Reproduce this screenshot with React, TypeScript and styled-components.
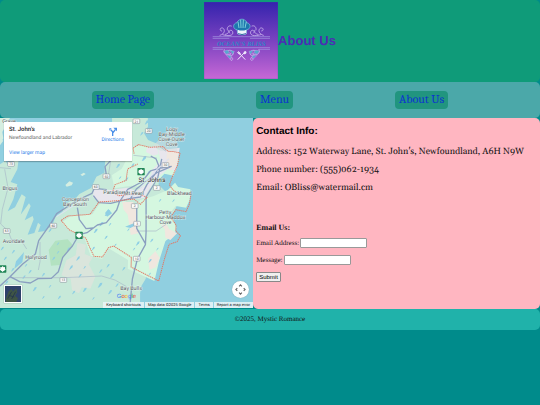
import React from "react";
import styled, { createGlobalStyle } from "styled-components";

const GlobalStyle = createGlobalStyle`
  *, *::before, *::after { box-sizing: border-box; }
  body {
    margin: 0;
    background: #008b8b;
    color: #111;
    font-family: "Liberation Serif", "Times New Roman", serif;
    text-rendering: geometricPrecision;
  }
  h1, h2, h3, p { margin: 0; }
`;

const Header = styled.header`
  display: flex;
  justify-content: center;
  align-items: center;
  padding: 2px 0 3px;
  border-radius: 5px;
  background: #0f9b79;
`;

const Logo = styled.svg`
  display: block;
  width: 74px;
  height: 77px;
`;

const PageTitle = styled.h1`
  color: #4b2db4;
  font: bold 13px/16px "Liberation Sans", Arial, sans-serif;
`;

const Nav = styled.nav`
  display: flex;
  justify-content: space-between;
  align-items: center;
  height: 36px;
  padding: 0 17%;
  border-radius: 5px;
  background: #4ba8a9;
`;

const NavLink = styled.a`
  padding: 1px 4px 2px;
  border-radius: 4px;
  background: #21957f;
  color: #0b34cf;
  font: 12px/15px Cambria, Caladea, "Noto Serif", serif;
  text-decoration: none;
`;

const Main = styled.main`
  display: grid;
  grid-template-columns: minmax(0, 15fr) minmax(0, 17fr);
  align-items: start;
`;

const MapFrame = styled.section`
  position: relative;
  height: 190px;
  overflow: hidden;
  background: #90cfe0;
  font-family: Roboto, Arial, sans-serif;
`;

const MapDrawing = styled.svg`
  display: block;
  width: 100%;
  height: 100%;
`;

const PlaceCard = styled.div`
  position: absolute;
  top: 4px;
  left: 4px;
  display: flex;
  justify-content: space-between;
  width: 128px;
  height: 39px;
  padding: 4px 8px 4px 5px;
  background: #fff;
  box-shadow: 0 1px 1px rgba(0, 0, 0, 0.25);
`;

const PlaceText = styled.div`
  display: flex;
  flex-direction: column;
  align-items: flex-start;
`;

const PlaceName = styled.h2`
  color: #222;
  font-size: 6px;
  font-weight: 500;
  line-height: 8px;
`;

const PlaceRegion = styled.p`
  color: #666;
  font-size: 5px;
  line-height: 9px;
`;

const MapLink = styled.a<{ $spaced?: boolean }>`
  display: flex;
  flex-direction: column;
  align-items: center;
  margin-top: ${(p) => (p.$spaced ? "6px" : "1px")};
  color: #2b7de9;
  font-size: 5px;
  line-height: 8px;
  text-decoration: none;
`;

const DirectionsIcon = styled.svg`
  width: 8px;
  height: 9px;
`;

const SatelliteButton = styled.button`
  position: absolute;
  bottom: 5px;
  left: 4px;
  width: 18px;
  height: 18px;
  padding: 1px;
  border: 0;
  background: #fff;
  box-shadow: 0 0 1px rgba(0, 0, 0, 0.4);
  svg { display: block; width: 16px; height: 16px; }
`;

const CameraButton = styled.button`
  position: absolute;
  right: 4px;
  bottom: 10px;
  width: 17px;
  height: 17px;
  padding: 3px;
  border: 0;
  border-radius: 50%;
  background: #fff;
  box-shadow: 0 0 1px rgba(0, 0, 0, 0.3);
  svg { display: block; width: 11px; height: 11px; }
`;

const Credits = styled.div`
  position: absolute;
  right: 0;
  bottom: 0;
  display: flex;
  gap: 1px;
`;

const creditText = `
  padding: 0 3px;
  border: 0;
  background: rgba(235, 245, 247, 0.85);
  color: #111;
  font: 4px/6px Roboto, Arial, sans-serif;
  text-decoration: none;
  text-rendering: geometricPrecision;
  white-space: nowrap;
`;
const CreditButton = styled.button`${creditText}`;
const CreditNote = styled.span`${creditText}`;
const CreditLink = styled.a`${creditText}`;

const Contact = styled.section`
  height: 191px;
  padding: 8px 3px;
  border-radius: 5px;
  background: #ffb6c1;
`;

const ContactTitle = styled.h2`
  margin-bottom: 9px;
  color: #000;
  font: bold 10px/12px "Liberation Sans", Arial, sans-serif;
`;

const ContactLine = styled.p`
  margin-bottom: 6px;
  font: 9px/12px Gelasio, Georgia, "Liberation Serif", serif;
`;

const MessageForm = styled.form`
  display: flex;
  flex-direction: column;
  align-items: flex-start;
  margin-top: 28px;
`;

const FormTitle = styled.h3`
  margin-bottom: 5px;
  font-size: 8px;
  line-height: 10px;
`;

const Field = styled.div`
  display: flex;
  align-items: center;
  gap: 1px;
  height: 10px;
  margin-bottom: 7px;
`;

const FieldLabel = styled.label`
  font-size: 7px;
  line-height: 9px;
`;

const TextInput = styled.input`
  width: 67px;
  height: 10px;
  padding: 0 1px;
  border: 1px solid #999;
  border-radius: 1px;
  background: #fff;
  font-size: 6px;
`;

const SubmitButton = styled.button`
  height: 10px;
  padding: 0 2px;
  border: 1px solid #888;
  border-radius: 1px;
  background: #efefef;
  color: #000;
  font: 6px/8px "Liberation Sans", Arial, sans-serif;
`;

const Footer = styled.footer`
  border-radius: 5px;
  background: #20b2aa;
  font-size: 7px;
  line-height: 21px;
  text-align: center;
`;

function BrandLogo() {
  return (
    <Logo viewBox="0 0 222 231" role="img" aria-label="Ocean's Bliss">
      <defs>
        <linearGradient id="sky" x1="0" y1="0" x2="0" y2="1">
          <stop offset="0" stopColor="#3423ad" />
          <stop offset="0.5" stopColor="#7a42c0" />
          <stop offset="1" stopColor="#c768d6" />
        </linearGradient>
        <g id="flourish" fill="none" stroke="#c9b5ec" strokeWidth="2.4" strokeLinecap="round">
          <path d="M48 100c14-4 17-17 8-22-9-2-10 9-3 9M56 98c14 5 34 5 30-9-4-9-15-2-9 4M70 84c-2-9 5-15 12-12M64 97c9-1 11-7 10-12" />
          <path d="M61 143c-5 12 7 18 18 13M65 150c9-10 24-5 23 5-2 9-14 6-9-1M76 161c9 4 13 10 8 14-6 1-7-6-2-7" />
          <path d="M60 147l11-3 6 8-10 5zM78 145l13 3-5 9zM68 160l14 1-4 9z" fill="#57a8ce" strokeWidth="1" />
        </g>
      </defs>
      <path fill="url(#sky)" stroke="#4556a8" d="M0 0h222v231H0z" />
      <path d="M26 104h172M26 109h50M138 109h60M26 137h172M26 142h32M164 142h34" stroke="#a69be4" strokeWidth="2" />
      <use href="#flourish" />
      <use href="#flourish" transform="translate(226 0) scale(-1 1)" />
      <path d="M99 83c-13-1-14-19 0-21 5-14 25-14 29 0 14 2 13 20 0 21l-2 13q-12 5-24 0z" fill="#1e77ae" stroke="#79c6dc" strokeWidth="2" />
      <path d="M105 78l-3-19M111 78l-1-25M117 78l1-25M123 78l4-19" stroke="#7bd2dc" strokeWidth="3" />
      <path d="M101 83q13 5 26 0v13q-13 6-26 0z" fill="#ecf4fb" />
      <path d="M102 95q12 5 24 0" fill="none" stroke="#2c659f" strokeWidth="3" />
      <text x="112" y="131" textAnchor="middle" fill="#2a86c8" fontFamily="Liberation Serif" fontWeight="bold" fontStyle="italic" fontSize="20">OCEAN'S BLISS</text>
      <path d="M104 152l19 20M122 151l-20 21M101 151l5 6M103 149l6 5" stroke="#eee8fb" strokeWidth="3" strokeLinecap="round" />
      <ellipse cx="123" cy="152" rx="4" ry="5" transform="rotate(40 123 152)" fill="#eee8fb" />
    </Logo>
  );
}

const places: [string, number, number][] = [
  ["Logy", 515, 44], ["Bay-Middle", 515, 59], ["Cove-Outer", 514, 74], ["Cove", 515, 89],
  ["Paradise", 341, 234], ["Mt Pearl", 401, 238], ["Blackhead", 538, 237],
  ["Conception", 226, 255], ["Bay South", 225, 270],
  ["Petty", 495, 294], ["Harbour-Maddox", 496, 309], ["Cove", 496, 324],
  ["Brigus", 30, 223], ["Avondale", 41, 380], ["Holyrood", 108, 428], ["Bay Bulls", 393, 522],
];

const routes: [string, number, number][] = [
  ["21", 409, 16], ["20", 446, 45], ["30", 496, 147], ["50", 319, 181], ["60", 287, 213],
  ["2", 470, 216], ["2", 404, 270], ["3", 411, 323], ["60", 160, 329], ["63", 20, 345],
  ["10", 410, 428], ["13", 190, 492], ["73", 33, 144],
];

const lakes: [number, number, number][] = [
  [322, 292, 8], [304, 325, 6], [287, 345, 6], [318, 365, 5], [346, 388, 4], [280, 398, 5],
  [330, 326, 4], [385, 342, 4], [413, 383, 6], [402, 400, 4], [455, 374, 5], [450, 435, 5],
  [472, 400, 4], [354, 150, 6], [380, 190, 5], [360, 186, 4], [432, 128, 7], [398, 148, 5],
  [446, 170, 5], [520, 255, 4], [480, 254, 4], [150, 344, 5], [120, 292, 4], [174, 384, 4],
  [205, 400, 5], [234, 428, 6], [213, 455, 6], [161, 428, 5], [174, 410, 4], [90, 468, 5],
  [72, 484, 5], [130, 477, 5], [104, 520, 6], [150, 512, 4], [240, 480, 5], [254, 455, 4],
  [302, 466, 5], [324, 450, 5], [336, 480, 6], [300, 508, 7], [254, 522, 6], [221, 530, 5],
  [330, 529, 6], [280, 548, 4], [351, 508, 5], [178, 545, 5], [130, 545, 4], [402, 460, 4],
  [371, 459, 5], [449, 475, 4], [60, 430, 5], [40, 408, 5], [16, 428, 5], [38, 462, 5],
  [78, 449, 4], [20, 500, 5], [7, 398, 5], [440, 20, 6], [464, 30, 4], [425, 54, 5],
];

function RegionMap() {
  return (
    <MapDrawing viewBox="0 6 759 570" preserveAspectRatio="xMidYMid slice" role="img" aria-label="Map of St. John's">
      <path fill="#90cfe0" d="M0 0h780v590H0z" />
      <path fill="#c7e9d9" d="M0 145l16-11 6 10 34-14-4 30-20 38 20 7-12 45-17 36 22-12 20-39 12 8-15 53 25-34 5 8-18 43 24-13 3 10-18 46 20-5 11-31 8 7-8 21 22-3 22-20 9-24 20-14 10-25 26-11 15-17 35-18 16-34 24-12 3-42 20-30V0h107l1 32-12 20 12 20 29 12 25 17-5 33-18 58 1 15 21 20 36 13-2 27-11 26-29-4-21 17 12 20 7 23 13 17-12 18-24 12-9 28-17 28-3 36-13 22-4 22v33l-59 22-40 15 60 18H0z" />
      <path fill="#d5eee1" d="M0 6h30L7 48l4 25-11 15zM196 207l12-11 11 4-4 8-15 4zM241 176l10-6 6 4-10 6z" />
      <path fill="#e0e3dc" d="M184 478l15-45 28-15 5-38 26 6-4 28 24 10-12 20 20 38-15 36-26-4-8 18-21-10-4-34z" opacity=".75" />
      <path fill="#b3e2c1" d="M146 402l20-28 37-4 16 18-23 25-17 34-26 2z" />
      <path fill="#d5f7e0" d="M190 316l22-16 65-5 24-35 63-10 40 20 17-18 40-12 42-18 22-22 9 13 37 7-2 31-11 24-31-5-16 20 18 44-5 20-28 21-19 60-14 60-80-37 1-26-60-36-18 33-34-10-19-53-45-23-24-23zM335 178l30-20 20-38 13-26 26-8 35 12 25-2 24 12 20 3 8 20-15 48-28-6-40 43-60-7-50 8z" />
      <path fill="#e8e6ed" d="M282 218l52 4 48-7 27 10 32-22 17-43 24-24-8-36 36-1 29-4-12 71-22-8-38 30-35 58-62 6-64 8-28-17zM440 95l29-4 7 23-16 5-22-11z" />
      <path fill="#f0e7df" d="M367 258h32l11 20 4 74-22 5-9-61-13-16zM483 326l16-2 8 15 24 13-20 20-15-7-2-25zM501 104l35 5-7 40-20 15-10-26zM444 428l22-22 13 20-12 28-19 8z" />
      <path fill="#d4dfdf" d="M458 91l38-40 17-20 20 52-2 24-50-3z" opacity=".6" />

      <g fill="#8fcfe4">
        {lakes.map(([x, y, r], i) => (
          <path key={i} d={`M${x - r} ${y + r}l${r}-${r * 2} ${r}-1-2 ${r}-${r} ${r}z`} />
        ))}
        <path d="M375 332l30-12 4 7-18 9zM315 291l10-12 11 13-15 10zM7 72l22-28-9 36zM48 436l24-28-5 31-24 19z" />
      </g>

      <g fill="none" stroke="#a9bac9" strokeWidth="2">
        <path d="M120 378v59l-5 25M30 485h160l115-5 40 12 35 20M325 178l9-58 30-25M478 91l20 15M0 155l33 3M400 118l70 8M14 160l10 56-17 64-5 44 22 20 10 26 30 4 16 25M410 345h58l30-20" />
      </g>
      <g fill="none" stroke="#8b9fc0" strokeWidth="4" strokeLinejoin="round">
        <path d="M0 510l30-28 38-38 38-30 10-40 36-51 18-30 63-41 43-20 7-15 37 4M30 482l29 15 32 4 23-13 40-1 21-20 13-43 29-34 20-34 24-6 31-23 27-7 31-38 8-24 25-38 42-22 26-33 31-9 33-5M280 239l16 21 36 2 60-15 29-4 20-38 25-32 10-24-8-20-16-9M485 129l-12 57-35 57v106l-2 37-24 43-15 60-7 76M410 267v70l26 46M232 275l6 36 20 27 21-2M320 185l-5-33 22-24M392 246l17-27 60-48 42-18" />
      </g>
      <g fill="none" stroke="#dce2f0" strokeWidth="3">
        <path d="M170 302l58-38 43-23M420 216l51-56 36-32M326 230l78 10" />
      </g>
      <path fill="none" stroke="#e17966" strokeWidth="3" strokeDasharray="4 2" d="M402 113l-3-17 16-10 34 8 39-2 16 14 18 1 18 4-8 37-14 31-10 28 10 14 21 15 34-3-5 31-10 23-30-6-17 22 17 24-1 18 14 14-10 18-24 8-14 44-17 66-83-42 1-29-53-34-16 5-18 28-25-2-10-20-15-35-50-25-24-28 20-13 67-5 27-37 58-4 46-5 20 16 20-21-30-12-54 7-20-10 8-23 33-13 5-34 30-15" />

      <g fontFamily="Roboto" fontSize="10" textAnchor="middle">
        {routes.map(([name, x, y], i) => (
          <g key={i}>
            <rect x={x - 10} y={y - 7} width="20" height="14" rx="2" fill="#fafafa" stroke="#7d8790" strokeWidth="1.5" />
            <text x={x} y={y + 4} fill="#444">{name}</text>
          </g>
        ))}
      </g>
      {[[423, 167], [237, 358], [8, 459]].map(([x, y]) => (
        <g key={x} transform={`translate(${x} ${y})`}>
          <rect x="-11" y="-11" width="22" height="22" rx="2" fill="#228657" />
          <path d="M0-9l3 4 4-1v5l2 2-5 5-3 1v2h-2V7l-3-1-5-5 2-2v-5l4 1z" fill="#fff" />
        </g>
      ))}
      <g fontFamily="Roboto" fontSize="16" textAnchor="middle" fill="#505960" stroke="#edf7f3" strokeWidth="2" paintOrder="stroke">
        {places.map(([name, x, y]) => <text key={name + y} x={x} y={y}>{name}</text>)}
        <text x="27" y="22">Grave</text>
        <text x="456" y="198" fontSize="19" fill="#222">St. John's</text>
      </g>
      <text x="350" y="547" fontFamily="Liberation Sans" fontSize="18">
        <tspan fill="#4285f4">G</tspan><tspan fill="#ea4335">o</tspan><tspan fill="#fbbc05">o</tspan><tspan fill="#4285f4">g</tspan><tspan fill="#34a853">l</tspan><tspan fill="#ea4335">e</tspan>
      </text>
    </MapDrawing>
  );
}

export default function App() {
  return (
    <>
      <GlobalStyle />
      <Header>
        <BrandLogo />
        <PageTitle>About Us</PageTitle>
      </Header>
      <Nav>
        <NavLink href="#home">Home Page</NavLink>
        <NavLink href="#menu">Menu</NavLink>
        <NavLink href="#about">About Us</NavLink>
      </Nav>
      <Main>
        <MapFrame>
          <RegionMap />
          <PlaceCard>
            <PlaceText>
              <PlaceName>St. John's</PlaceName>
              <PlaceRegion>Newfoundland and Labrador</PlaceRegion>
              <MapLink href="#map" $spaced>View larger map</MapLink>
            </PlaceText>
            <MapLink href="#directions">
              <DirectionsIcon viewBox="0 0 24 27" aria-hidden="true">
                <path d="M11 27V14L5 8M11 18l8-10" fill="none" stroke="#4a8fe8" strokeWidth="4" />
                <path d="M1 4h7L1 11zM13 2h11v11z" fill="#4a8fe8" />
              </DirectionsIcon>
              Directions
            </MapLink>
          </PlaceCard>
          <SatelliteButton type="button" aria-label="Show satellite imagery">
            <svg viewBox="0 0 48 48">
              <path fill="#2e416a" d="M0 0h48v48H0z" />
              <path fill="#3f5545" d="M2 40l9-24 9-7 4 8 10-10 3 12-7 10 9 8-5 11H3z" />
              <path d="M8 38l12-21M20 39l12-22M11 28l17 5" stroke="#27394e" strokeWidth="3" />
            </svg>
          </SatelliteButton>
          <CameraButton type="button" aria-label="Map camera controls">
            <svg viewBox="0 0 24 24" fill="none" stroke="#666" strokeWidth="2.5">
              <path d="M9 5l3-3 3 3M9 19l3 3 3-3M5 9l-3 3 3 3M19 9l3 3-3 3" />
            </svg>
          </CameraButton>
          <Credits>
            <CreditButton type="button">Keyboard shortcuts</CreditButton>
            <CreditNote>Map data ©2025 Google</CreditNote>
            <CreditLink href="#terms">Terms</CreditLink>
            <CreditLink href="#report">Report a map error</CreditLink>
          </Credits>
        </MapFrame>
        <Contact>
          <ContactTitle>Contact Info:</ContactTitle>
          <ContactLine>Address: 152 Waterway Lane, St. John's, Newfoundland, A6H N9W</ContactLine>
          <ContactLine>Phone number: (555)062-1934</ContactLine>
          <ContactLine>Email: OBliss@watermail.cm</ContactLine>
          <MessageForm>
            <FormTitle>Email Us:</FormTitle>
            <Field>
              <FieldLabel htmlFor="email">Email Address:</FieldLabel>
              <TextInput id="email" type="email" />
            </Field>
            <Field>
              <FieldLabel htmlFor="message">Message:</FieldLabel>
              <TextInput id="message" type="text" />
            </Field>
            <SubmitButton type="button">Submit</SubmitButton>
          </MessageForm>
        </Contact>
      </Main>
      <Footer>©2025, Mystic Romance</Footer>
    </>
  );
}
